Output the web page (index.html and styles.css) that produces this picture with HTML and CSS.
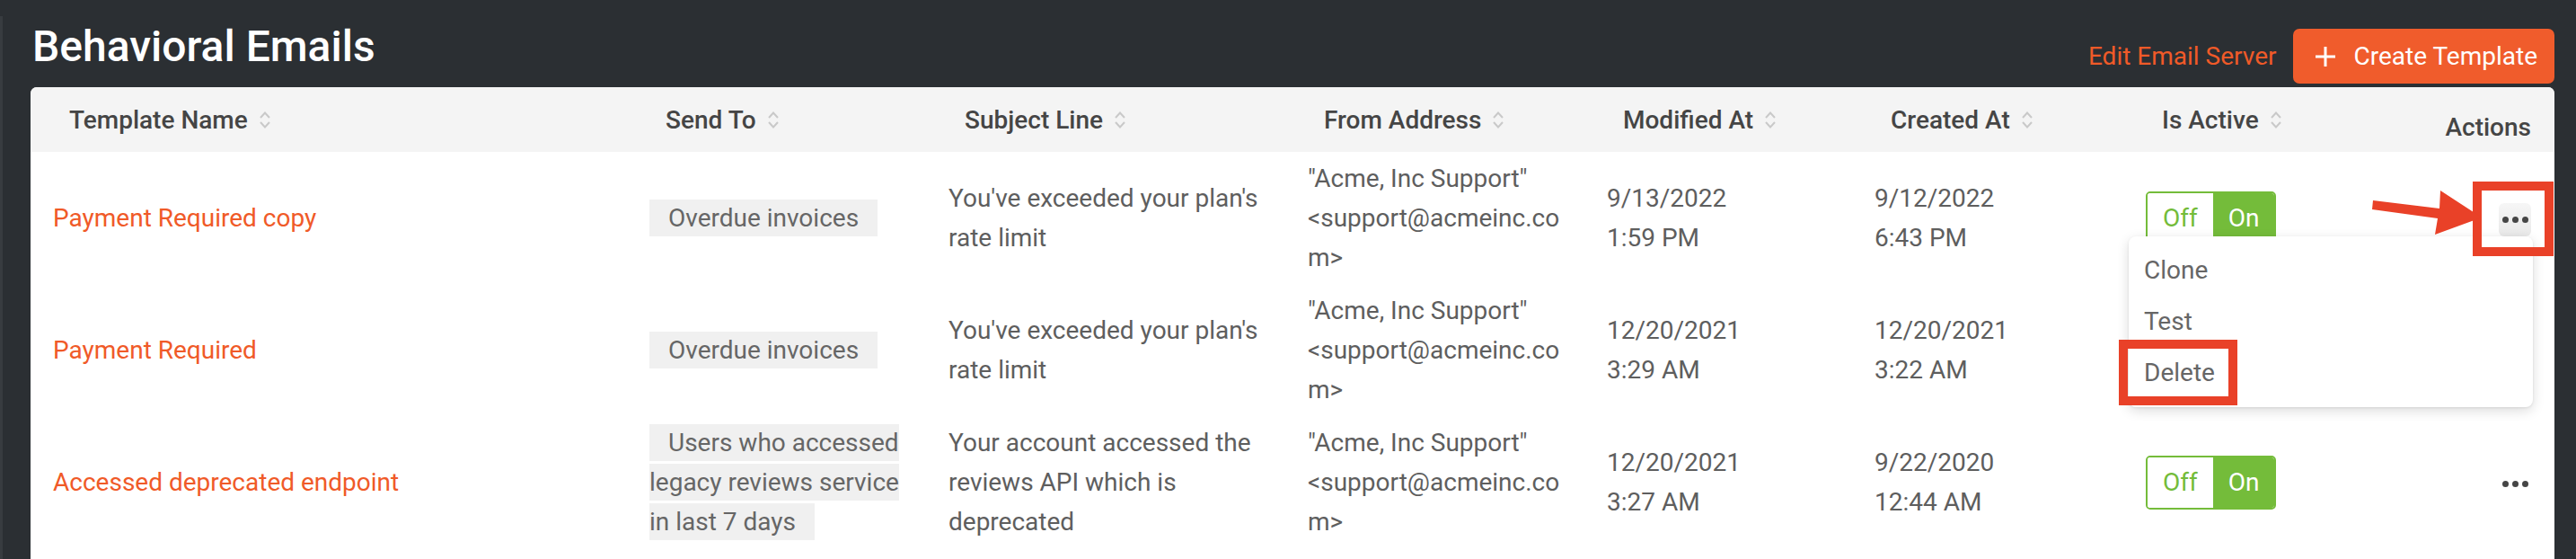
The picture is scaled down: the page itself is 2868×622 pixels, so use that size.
FILE: index.html
```html
<!DOCTYPE html>
<html lang="en">
<head>
<meta charset="utf-8">
<title>Behavioral Emails</title>
<link rel="stylesheet" href="styles.css">
</head>
<body>
<div class="app">
  <div class="rail"></div>
  <main class="main">
    <div class="topbar">
      <h1 class="title">Behavioral Emails</h1>
      <div class="top-actions">
        <a class="link-btn" href="#">Edit Email Server</a>
        <button class="primary-btn" type="button">
          <svg class="plus" viewBox="0 0 24 24" width="24" height="24" aria-hidden="true"><path d="M12 1v22M1 12h22" stroke="#fff" stroke-width="3" fill="none"/></svg>
          <span>Create Template</span>
        </button>
      </div>
    </div>

    <section class="card">
      <table class="grid">
        <colgroup>
          <col class="c1"><col class="c2"><col class="c3"><col class="c4"><col class="c5"><col class="c6"><col class="c7"><col class="c8">
        </colgroup>
        <thead>
          <tr>
            <th><span class="th-in">Template Name<svg class="sort" viewBox="0 0 14 21" width="14" height="21"><path d="M2 8 7 2.5 12 8M2 13 7 18.5 12 13" fill="none" stroke="#c9c9c9" stroke-width="2"/></svg></span></th>
            <th><span class="th-in">Send To<svg class="sort" viewBox="0 0 14 21" width="14" height="21"><path d="M2 8 7 2.5 12 8M2 13 7 18.5 12 13" fill="none" stroke="#c9c9c9" stroke-width="2"/></svg></span></th>
            <th><span class="th-in">Subject Line<svg class="sort" viewBox="0 0 14 21" width="14" height="21"><path d="M2 8 7 2.5 12 8M2 13 7 18.5 12 13" fill="none" stroke="#c9c9c9" stroke-width="2"/></svg></span></th>
            <th><span class="th-in">From Address<svg class="sort" viewBox="0 0 14 21" width="14" height="21"><path d="M2 8 7 2.5 12 8M2 13 7 18.5 12 13" fill="none" stroke="#c9c9c9" stroke-width="2"/></svg></span></th>
            <th><span class="th-in">Modified At<svg class="sort" viewBox="0 0 14 21" width="14" height="21"><path d="M2 8 7 2.5 12 8M2 13 7 18.5 12 13" fill="none" stroke="#c9c9c9" stroke-width="2"/></svg></span></th>
            <th><span class="th-in">Created At<svg class="sort" viewBox="0 0 14 21" width="14" height="21"><path d="M2 8 7 2.5 12 8M2 13 7 18.5 12 13" fill="none" stroke="#c9c9c9" stroke-width="2"/></svg></span></th>
            <th><span class="th-in">Is Active<svg class="sort" viewBox="0 0 14 21" width="14" height="21"><path d="M2 8 7 2.5 12 8M2 13 7 18.5 12 13" fill="none" stroke="#c9c9c9" stroke-width="2"/></svg></span></th>
            <th class="th-actions">Actions</th>
          </tr>
        </thead>
        <tbody>
          <tr>
            <td><a class="name" href="#">Payment Required copy</a></td>
            <td class="td-send"><span class="tag">Overdue invoices</span></td>
            <td>You've exceeded your plan's rate limit</td>
            <td class="td-from">"Acme, Inc Support" &lt;support@acmeinc.com&gt;</td>
            <td>9/13/2022<br>1:59 PM</td>
            <td>9/12/2022<br>6:43 PM</td>
            <td><span class="toggle"><span class="t-off">Off</span><span class="t-on">On</span></span></td>
            <td class="td-actions"><button class="more more-active" type="button"><i></i><i></i><i></i></button></td>
          </tr>
          <tr>
            <td><a class="name" href="#">Payment Required</a></td>
            <td class="td-send"><span class="tag">Overdue invoices</span></td>
            <td>You've exceeded your plan's rate limit</td>
            <td class="td-from">"Acme, Inc Support" &lt;support@acmeinc.com&gt;</td>
            <td>12/20/2021<br>3:29 AM</td>
            <td>12/20/2021<br>3:22 AM</td>
            <td><span class="toggle"><span class="t-off">Off</span><span class="t-on">On</span></span></td>
            <td class="td-actions"><button class="more" type="button"><i></i><i></i><i></i></button></td>
          </tr>
          <tr>
            <td><a class="name" href="#">Accessed deprecated endpoint</a></td>
            <td class="td-send"><span class="tag">Users who accessed legacy reviews service in last 7 days</span></td>
            <td>Your account accessed the reviews API which is deprecated</td>
            <td class="td-from">"Acme, Inc Support" &lt;support@acmeinc.com&gt;</td>
            <td>12/20/2021<br>3:27 AM</td>
            <td>9/22/2020<br>12:44 AM</td>
            <td><span class="toggle"><span class="t-off">Off</span><span class="t-on">On</span></span></td>
            <td class="td-actions"><button class="more" type="button"><i></i><i></i><i></i></button></td>
          </tr>
        </tbody>
      </table>

      <ul class="menu">
        <li>Clone</li>
        <li>Test</li>
        <li>Delete</li>
      </ul>
      <div class="callout callout-more"></div>
      <div class="callout callout-delete"></div>
      <svg class="arrow" viewBox="0 0 140 70" width="140" height="70" aria-hidden="true">
        <polygon points="12,23 86,32 87,12 133,42 81,61 84,43 11,33" fill="#e94128"/>
      </svg>
    </section>
  </main>
</div>
</body>
</html>
```

FILE: styles.css
```css
* { box-sizing: border-box; }

html, body {
  margin: 0;
  padding: 0;
  height: 622px;
  overflow: hidden;
  background: #2b2f33;
  font-family: Roboto, "Liberation Sans", Arial, sans-serif;
}

.app {
  display: flex;
  height: 622px;
}

.rail {
  width: 3px;
  margin-top: 18px;
  background: #383c40;
  flex: none;
}

.main {
  flex: 1;
  padding: 0 24px 0 31px;
  display: flex;
  flex-direction: column;
}

.topbar {
  display: flex;
  justify-content: space-between;
  align-items: flex-start;
  height: 97px;
  padding-top: 28px;
}

.title {
  margin: 0;
  color: #ffffff;
  font-size: 48px;
  line-height: 48px;
  font-weight: 500;
  padding-left: 2px;
}

.top-actions {
  display: flex;
  align-items: center;
  gap: 18px;
  margin-top: 4px;
}

.link-btn {
  color: #f05a28;
  font-size: 28px;
  text-decoration: none;
}

.primary-btn {
  display: flex;
  align-items: center;
  gap: 20px;
  height: 61px;
  padding: 0 19px 0 24px;
  border: 0;
  border-radius: 7px;
  background: #f05c2c;
  color: #ffffff;
  font-family: inherit;
  font-size: 28px;
}

.plus { display: block; }

.card {
  position: relative;
  flex: 1;
  background: #ffffff;
  border-radius: 7px 7px 0 0;
  overflow: hidden;
}

.grid {
  width: 2810px;
  table-layout: fixed;
  border-collapse: collapse;
  border-spacing: 0;
}

.c1 { width: 664px; }
.c2 { width: 333px; }
.c3 { width: 400px; }
.c4 { width: 333px; }
.c5 { width: 298px; }
.c6 { width: 302px; }
.c7 { width: 296px; }
.c8 { width: 184px; }

.grid th {
  height: 72px;
  padding: 0 12px 0 43px;
  background: #f4f4f4;
  color: #454545;
  font-size: 28px;
  font-weight: 500;
  text-align: left;
  white-space: nowrap;
  vertical-align: middle;
}

.th-in {
  display: inline-flex;
  align-items: center;
  gap: 12px;
}

.sort { display: block; }

.grid th.th-actions {
  text-align: right;
  padding: 16px 26px 0 0;
}

.grid td {
  padding: 8px 12px 7px 25px;
  color: #5e5e5e;
  font-size: 28px;
  line-height: 44px;
  vertical-align: middle;
}

.grid td.td-from {
  padding-right: 16px;
  overflow-wrap: anywhere;
}

.name {
  color: #f05a28;
  text-decoration: none;
}

.tag {
  background: #f0f0f0;
  color: #666666;
  padding: 4px 21px;
}

.toggle {
  display: inline-flex;
  height: 60px;
  border: 2px solid #74bc3a;
  border-radius: 5px;
  overflow: hidden;
  vertical-align: middle;
}

.t-off,
.t-on {
  line-height: 56px;
  padding: 0 17px;
}

.t-off {
  color: #74bc3a;
  background: #ffffff;
}

.t-on {
  color: #ffffff;
  background: #74bc3a;
}

.grid td.td-actions {
  text-align: right;
  padding-right: 26px;
}

.more {
  display: inline-flex;
  justify-content: center;
  align-items: center;
  gap: 4px;
  width: 36px;
  height: 37px;
  padding: 0;
  border: 0;
  border-radius: 6px;
  background: transparent;
  vertical-align: middle;
}

.more i {
  display: block;
  width: 7px;
  height: 7px;
  border-radius: 50%;
  background: #454545;
}

.more-active {
  background: linear-gradient(#f6f6f6, #e9e9e9);
}

.menu {
  position: absolute;
  left: 2336px;
  top: 166px;
  width: 450px;
  height: 190px;
  margin: 0;
  padding: 9px 0 10px;
  list-style: none;
  background: #ffffff;
  border-radius: 8px;
  box-shadow: 0 4px 14px rgba(0, 0, 0, 0.14), 0 1px 3px rgba(0, 0, 0, 0.08);
  z-index: 2;
}

.menu li {
  height: 57px;
  line-height: 57px;
  padding-left: 17px;
  color: #666666;
  font-size: 28px;
}

.callout {
  position: absolute;
  border: 10px solid #e94128;
  z-index: 3;
}

.callout-more {
  left: 2719px;
  top: 105px;
  width: 90px;
  height: 83px;
}

.callout-delete {
  left: 2325px;
  top: 281px;
  width: 132px;
  height: 73px;
}

.arrow {
  position: absolute;
  left: 2596px;
  top: 103px;
  z-index: 4;
}
```
